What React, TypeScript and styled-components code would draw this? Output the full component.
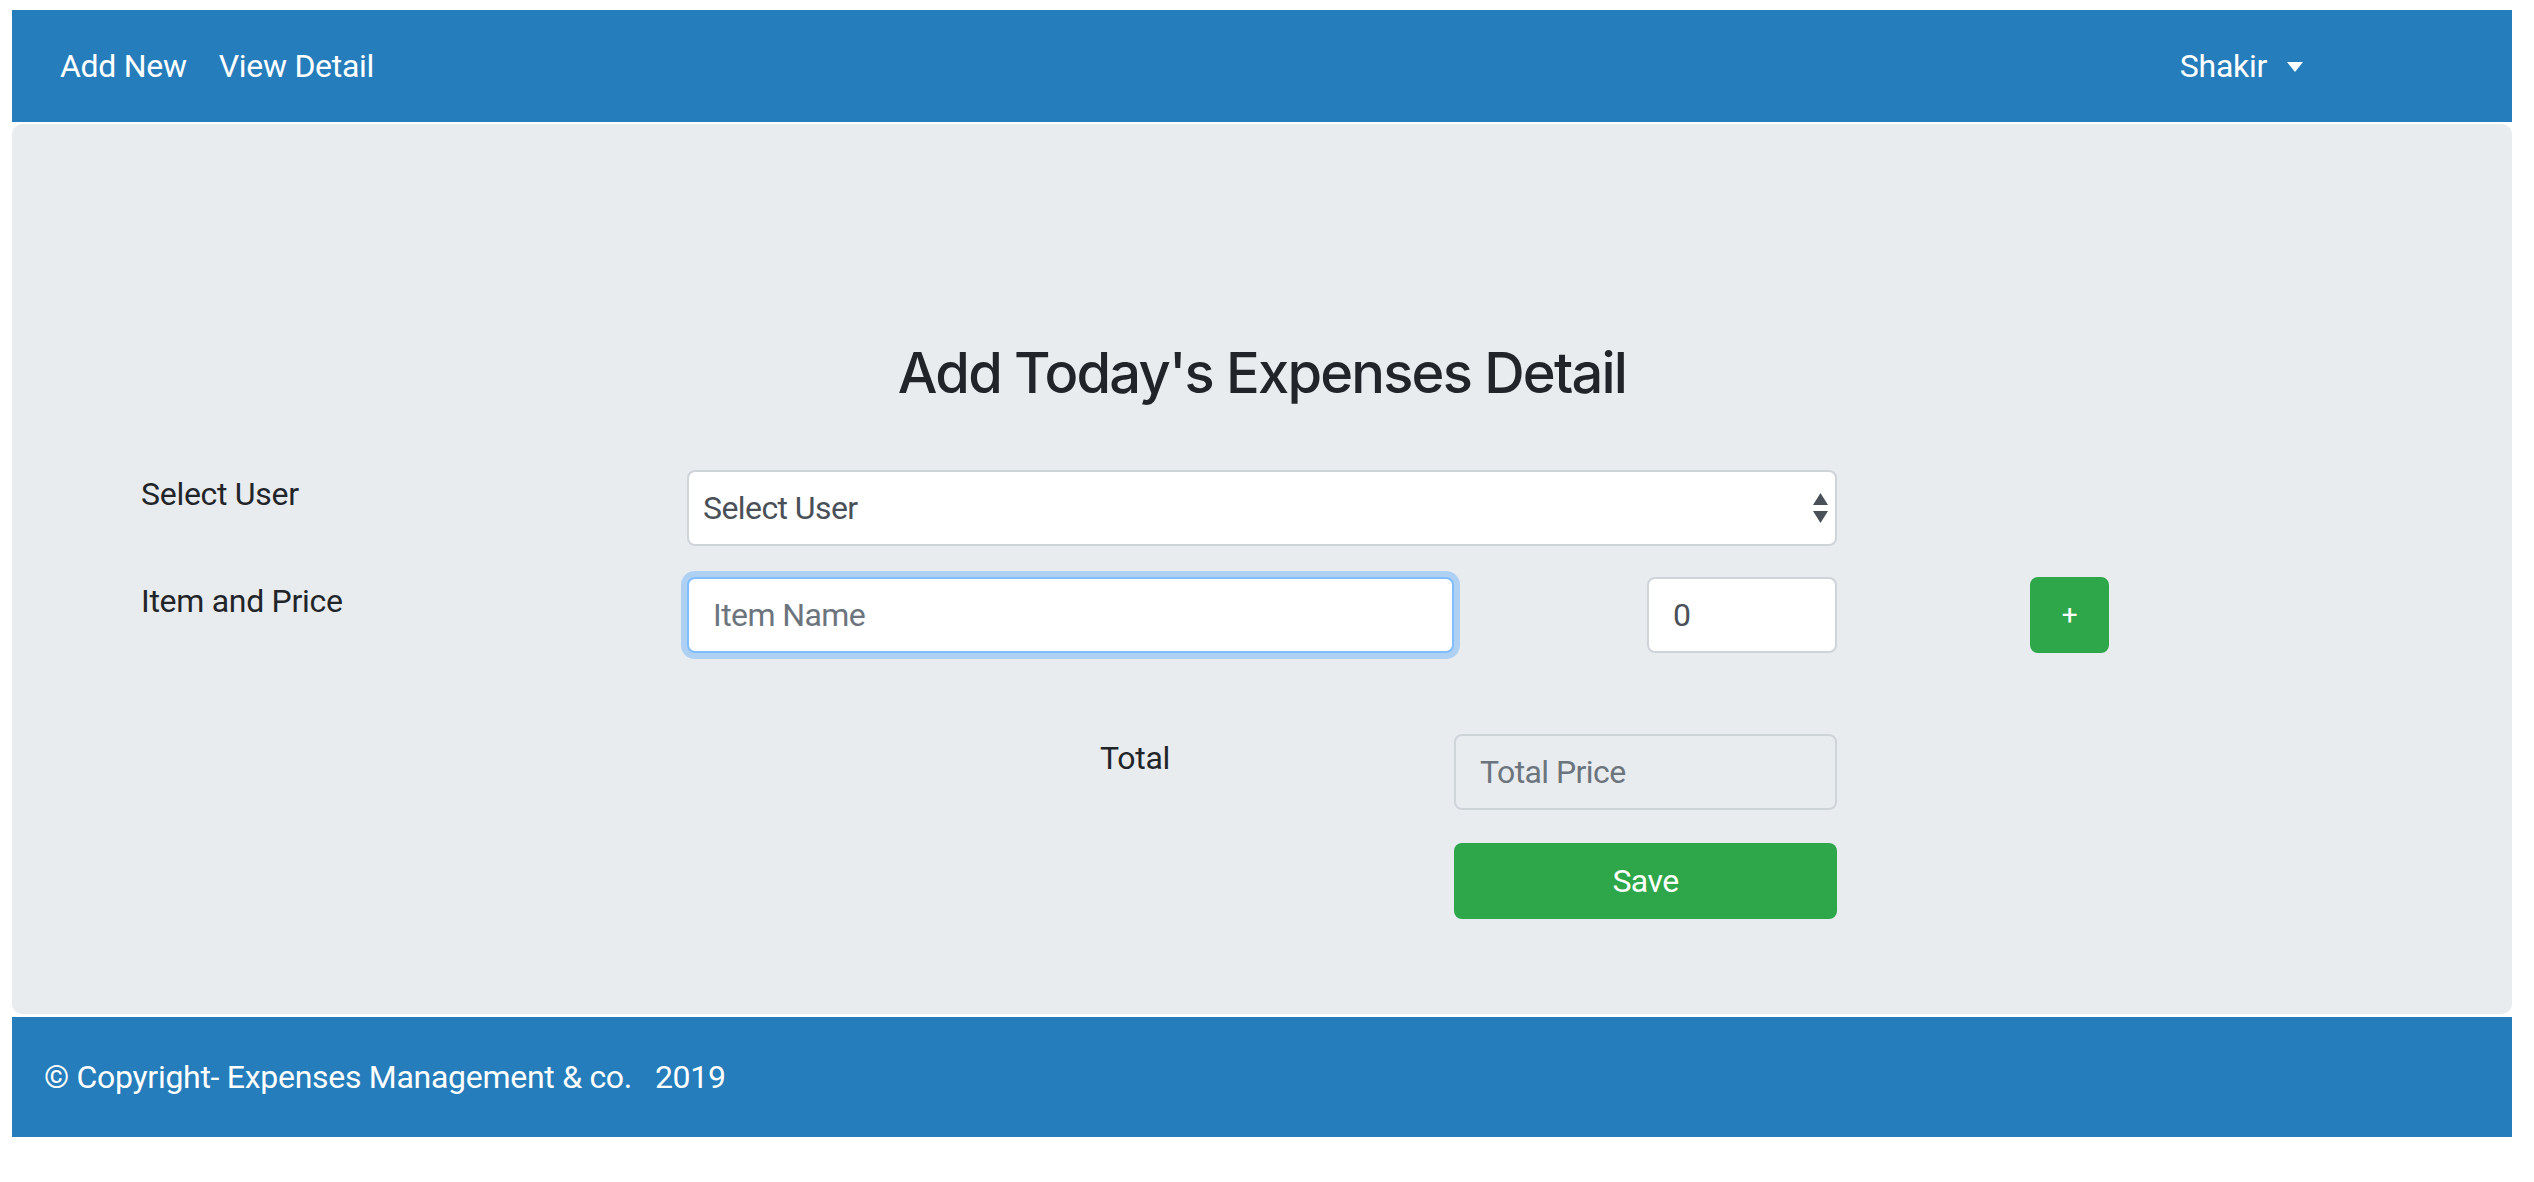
import React from "react";
import styled, { createGlobalStyle } from "styled-components";

const GlobalStyle = createGlobalStyle`
  html, body {
    margin: 0;
    padding: 0;
    background: #ffffff;
  }
  body {
    font-family: Roboto, Inter, "Liberation Sans", sans-serif;
    color: #212529;
    letter-spacing: -0.018em;
    -webkit-font-smoothing: antialiased;
  }
  input, select, button {
    letter-spacing: -0.018em;
  }
  * { box-sizing: border-box; }
`;

const Page = styled.div`
  padding: 10px 22px 0 12px;
`;

const Navbar = styled.nav`
  display: flex;
  align-items: center;
  background: #257dbb;
  padding: 32px;
  height: 112px;
`;

const NavLinks = styled.div`
  display: flex;
  align-items: center;
`;

const NavLink = styled.a`
  display: block;
  padding: 0 16px;
  font-size: 32px;
  line-height: 48px;
  color: #ffffff;
  text-decoration: none;
  cursor: pointer;
`;

const UserToggle = styled.a`
  display: flex;
  align-items: center;
  margin-left: auto;
  margin-right: 161px;
  padding: 0 16px;
  font-size: 32px;
  line-height: 48px;
  color: #ffffff;
  cursor: pointer;
`;

const Caret = styled.span`
  display: inline-block;
  width: 0;
  height: 0;
  margin-left: 20px;
  margin-top: 2px;
  border-top: 10px solid #ffffff;
  border-left: 8px solid transparent;
  border-right: 8px solid transparent;
`;

const Jumbotron = styled.main`
  margin-top: 2px;
  background: #e9ecef;
  border-radius: 10px;
  padding: 216px 0 95px 129px;
`;

const Title = styled.h3`
  margin: 0 0 63px -129px;
  text-align: center;
  font-family: Inter, Roboto, sans-serif;
  font-size: 56px;
  font-weight: 500;
  line-height: 1.2;
  letter-spacing: -0.032em;
  color: #212529;
`;

const FormRow = styled.div<{ $gap: number }>`
  display: grid;
  grid-template-columns: 546px 767px 193px 190px 193px 79px;
  align-items: start;
  margin-top: ${(p) => p.$gap}px;
`;

const Label = styled.label<{ $indent?: number; $col?: string }>`
  grid-column: ${(p) => p.$col ?? "auto"};
  font-size: 32px;
  line-height: 48px;
  color: #212529;
  padding-left: ${(p) => p.$indent ?? 0}px;
`;

const SelectWrap = styled.div`
  position: relative;
  grid-column: 2 / span 3;
`;

const Select = styled.select`
  appearance: none;
  -webkit-appearance: none;
  width: 100%;
  height: 76px;
  padding: 0 48px 0 14px;
  font-family: inherit;
  font-size: 32px;
  color: #495057;
  background: #ffffff;
  border: 2px solid #ced4da;
  border-radius: 8px;
  outline: none;
`;

const SelectArrows = styled.svg`
  position: absolute;
  right: 9px;
  top: 23px;
  width: 15px;
  height: 30px;
  pointer-events: none;
`;

const Input = styled.input<{ $focused?: boolean; $readOnlyBg?: boolean; $span?: string }>`
  grid-column: ${(p) => p.$span ?? "auto"};
  width: 100%;
  height: 76px;
  padding: 0 24px;
  font-family: inherit;
  font-size: 32px;
  color: #495057;
  background: ${(p) => (p.$readOnlyBg ? "#e9ecef" : "#ffffff")};
  border: 2px solid ${(p) => (p.$focused ? "#80bdff" : "#ced4da")};
  border-radius: 8px;
  outline: none;
  box-shadow: ${(p) => (p.$focused ? "0 0 0 6px rgba(0, 123, 255, 0.25)" : "none")};

  &::placeholder {
    color: #6c757d;
    opacity: 1;
  }
`;

const Button = styled.button<{ $span?: string; $small?: boolean }>`
  grid-column: ${(p) => p.$span ?? "auto"};
  height: 76px;
  width: 100%;
  display: flex;
  align-items: center;
  justify-content: center;
  padding: 0;
  font-family: inherit;
  font-size: ${(p) => (p.$small ? "28px" : "32px")};
  line-height: 1;
  color: #ffffff;
  background: #2ea74a;
  border: none;
  border-radius: 8px;
  cursor: pointer;
`;

const Footer = styled.footer`
  margin-top: 3px;
  background: #257dbb;
  padding: 36px 32px;
  height: 120px;
  font-size: 32px;
  line-height: 48px;
  color: #ffffff;
  white-space: pre;
`;

export default function App() {
  return (
    <>
      <GlobalStyle />
      <Page>
        <Navbar>
          <NavLinks>
            <NavLink>Add New</NavLink>
            <NavLink>View Detail</NavLink>
          </NavLinks>
          <UserToggle>
            Shakir
            <Caret />
          </UserToggle>
        </Navbar>

        <Jumbotron>
          <Title>Add Today's Expenses Detail</Title>

          <FormRow $gap={0}>
            <Label>Select User</Label>
            <SelectWrap>
              <Select defaultValue="">
                <option value="">Select User</option>
              </Select>
              <SelectArrows viewBox="0 0 15 30">
                <path d="M7.5 0 L15 12 L0 12 Z" fill="#495057" />
                <path d="M0 18 L15 18 L7.5 30 Z" fill="#495057" />
              </SelectArrows>
            </SelectWrap>
          </FormRow>

          <FormRow $gap={31}>
            <Label>Item and Price</Label>
            <Input $focused placeholder="Item Name" $span="2" />
            <Input defaultValue="0" $span="4" />
            <Button $span="6" $small>+</Button>
          </FormRow>

          <FormRow $gap={81}>
            <Label $indent={413} $col="2">Total</Label>
            <Input $readOnlyBg readOnly placeholder="Total Price" $span="3 / span 2" />
          </FormRow>

          <FormRow $gap={33}>
            <Button $span="3 / span 2">Save</Button>
          </FormRow>
        </Jumbotron>

        <Footer>{"© Copyright- Expenses Management & co.   2019"}</Footer>
      </Page>
    </>
  );
}
